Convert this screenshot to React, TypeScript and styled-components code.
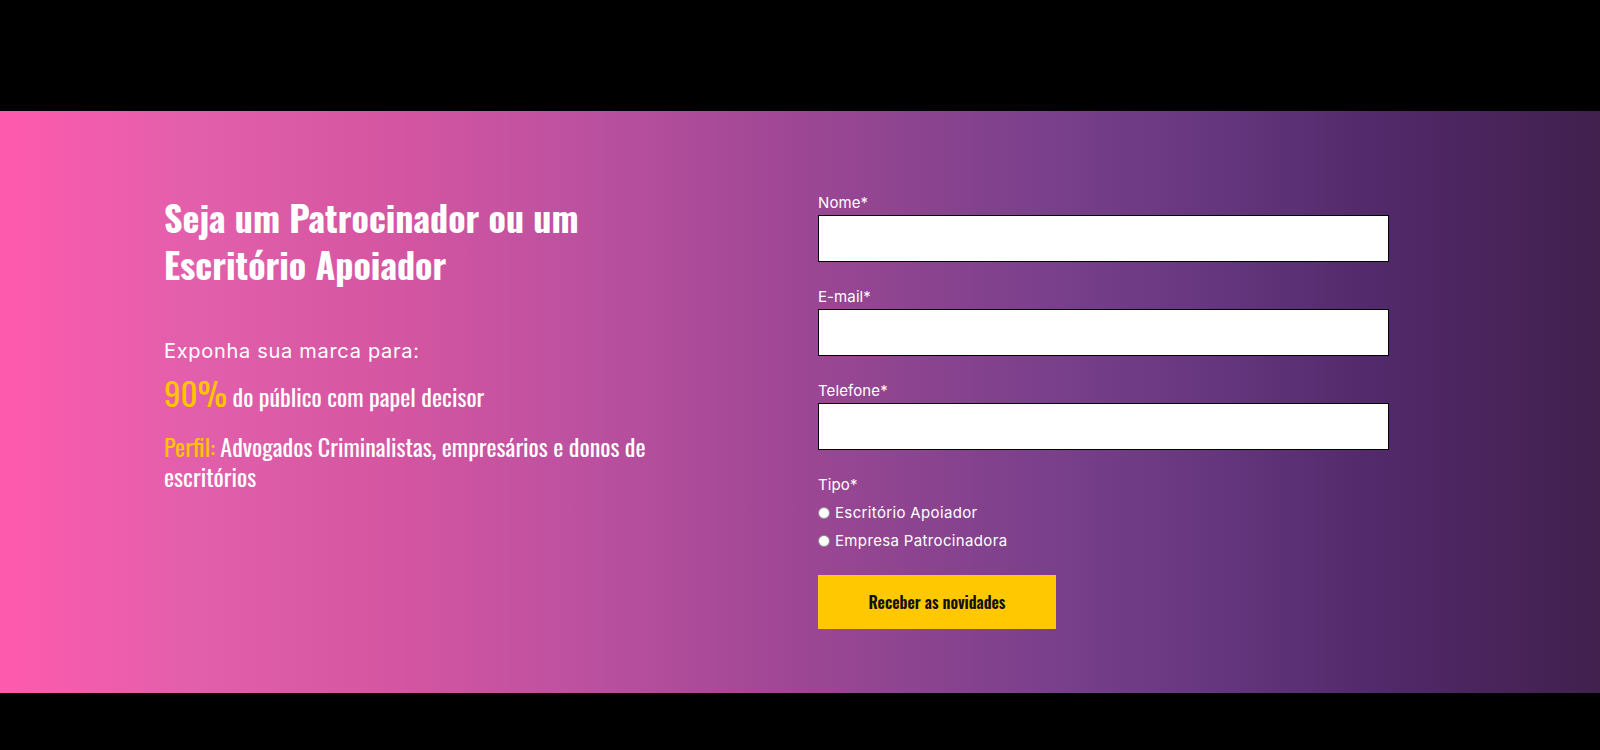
import React from 'react';
import styled, {createGlobalStyle} from 'styled-components';

const GlobalStyle = createGlobalStyle`
  html, body {
    margin: 0;
    padding: 0;
    background: #000;
  }
  body {
    font-family: "Inter", "Noto Sans", sans-serif;
  }
`;

const Page = styled.div`
  width: 100%;
  height: 750px;
  padding-top: 111px;
  box-sizing: border-box;
  background: #000;
`;

const Section = styled.section`
  height: 582px;
  box-sizing: border-box;
  padding: 80px 0 0 164px;
  background: linear-gradient(
    90deg,
    #ff5aad 0%,
    #e25fab 12%,
    #d455a1 25%,
    #bd51a0 36%,
    #a44896 47%,
    #8d4490 57%,
    #793f8b 66%,
    #65367e 76%,
    #52296a 86%,
    #41204e 100%
  );
  display: grid;
  grid-template-columns: 654px 571px;
  align-items: start;
`;

const InfoColumn = styled.div`
  width: 500px;
  padding-top: 2px;
  color: #fff;
`;

const Title = styled.h2`
  margin: 0 0 50px;
  font-family: "Oswald", "Liberation Sans Narrow", "DejaVu Sans Condensed", sans-serif;
  font-weight: 700;
  font-size: 36px;
  line-height: 47px;
  color: #fff;
`;

const Lead = styled.p`
  margin: 0 0 11px;
  font-size: 20px;
  letter-spacing: 0.7px;
  font-weight: 400;
  line-height: 28px;
`;

const Highlight = styled.p<{gap?: number}>`
  margin: 0 0 ${(p) => p.gap ?? 0}px;
  font-family: "Oswald", "Liberation Sans Narrow", "DejaVu Sans Condensed", sans-serif;
  font-size: 24px;
  line-height: 30px;
`;

const Accent = styled.span<{big?: boolean}>`
  color: #ffc400;
  font-size: ${(p) => (p.big ? '33px' : 'inherit')};
  line-height: 1;
`;

const Form = styled.form`
  display: flex;
  flex-direction: column;
  color: #fff;
`;

const Field = styled.div`
  display: flex;
  flex-direction: column;
  margin-bottom: 23px;
`;

const Label = styled.label<{tight?: boolean}>`
  font-size: 15px;
  line-height: 24px;
  letter-spacing: 0.1px;
  margin: ${(p) => (p.tight ? '0 0 2px' : '0')};
`;

const TextInput = styled.input`
  height: 47px;
  box-sizing: border-box;
  border: 1px solid #000;
  background: #fff;
  outline: none;
  padding: 0 12px;
  font-size: 15px;
`;

const RadioRow = styled.label`
  display: flex;
  align-items: center;
  gap: 5px;
  font-size: 15px;
  letter-spacing: 0.35px;
  line-height: 28px;
`;

const Radio = styled.span`
  width: 12px;
  height: 12px;
  border-radius: 50%;
  background: #fff;
  border: 1px solid #8a8a8a;
  box-sizing: border-box;
`;

const Submit = styled.button`
  margin-top: 20px;
  width: 238px;
  height: 54px;
  border: none;
  background: #ffc800;
  color: #111;
  font-family: "Oswald", "Liberation Sans Narrow", "DejaVu Sans Condensed", sans-serif;
  font-weight: 600;
  font-size: 16px;
  cursor: pointer;
`;

const fields = ['Nome*', 'E-mail*', 'Telefone*'];

function App(): React.ReactElement {
  return (
    <Page>
      <GlobalStyle />
      <Section>
        <InfoColumn>
          <Title>Seja um Patrocinador ou um Escritório Apoiador</Title>
          <Lead>Exponha sua marca para:</Lead>
          <Highlight gap={20}>
            <Accent big>90%</Accent> do público com papel decisor
          </Highlight>
          <Highlight>
            <Accent>Perfil:</Accent> Advogados Criminalistas, empresários e donos de escritórios
          </Highlight>
        </InfoColumn>
        <Form onSubmit={(e) => e.preventDefault()}>
          {fields.map((f) => (
            <Field key={f}>
              <Label>{f}</Label>
              <TextInput type='text' />
            </Field>
          ))}
          <Label tight>Tipo*</Label>
          <RadioRow>
            <Radio />
            Escritório Apoiador
          </RadioRow>
          <RadioRow>
            <Radio />
            Empresa Patrocinadora
          </RadioRow>
          <Submit type='submit'>Receber as novidades</Submit>
        </Form>
      </Section>
    </Page>
  );
}

export default App;
